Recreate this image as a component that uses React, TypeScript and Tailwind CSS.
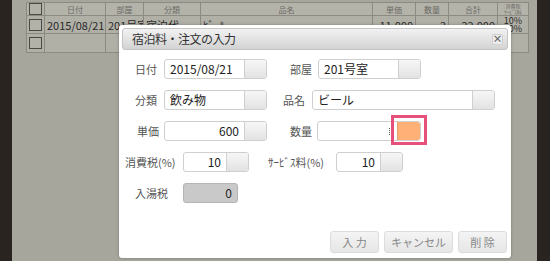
import React from 'react';

const font = "font-['Noto_Sans_CJK_JP',sans-serif]";

function Check() {
  return <div className="w-[13px] h-[12px] border border-[#4a4a45] bg-[#b3b2a9]" />;
}

function Field({ w, value, right, btn = true, disabled }: { w: number; value?: string; right?: boolean; btn?: boolean; disabled?: boolean }) {
  return (
    <div
      className={`flex h-[20px] rounded-[3px] border ${disabled ? 'border-[#b5b5b5] bg-[#c9c9c9]' : 'border-[#cfcfcf] bg-white'} overflow-hidden`}
      style={{ width: w }}
    >
      <div className={`flex-1 flex items-center px-[5px] text-[12px] text-[#222] ${right ? 'justify-end' : ''}`}>{value}</div>
      {btn && <div className="w-[22px] border-l border-[#d0d0d0] bg-gradient-to-b from-[#f6f6f6] via-[#ededed] to-[#e2e2e2]" />}
    </div>
  );
}

function Label({ children, className = '' }: { children: React.ReactNode; className?: string }) {
  return <div className={`text-[11px] text-[#555] whitespace-nowrap ${className}`}>{children}</div>;
}

export default function App() {
  const cols = [18, 61, 38, 57, 172, 43, 33, 49, 31];
  const heads = ['', '日付', '部屋', '分類', '品名', '単価', '数量', '合計', ''];
  const row1 = ['', '2015/08/21', '201号室', '宿泊代', 'ﾋﾞｰﾙ', '11,000', '2', '22,000', ''];
  return (
    <div className={`relative w-[550px] h-[261px] overflow-hidden flex bg-[#a7a69c] ${font}`}>
      <div className="w-[12px] h-full bg-[#2a2420]" />
      <div className="flex-1 pl-[14px] pt-[2px]">
        <table className="table-fixed w-[502px] border-collapse border border-[#8c8b83] text-[#2a2a2a]">
          <colgroup>
            {cols.map((c, i) => <col key={i} style={{ width: c }} />)}
          </colgroup>
          <tbody>
            <tr className="h-[13px] bg-[#b4b3aa]">
              {heads.map((h, i) => (
                <td key={i} className="border border-[#8c8b83] p-0 text-center text-[8px] leading-[11px] text-[#6a6a66] overflow-hidden whitespace-nowrap">
                  {i === 0 ? <div className="flex justify-center"><Check /></div> : i === 8 ? (
                    <div className="text-[5px] leading-[6px]">消費税<br />ｻｰﾋﾞｽ料</div>
                  ) : h}
                </td>
              ))}
            </tr>
            <tr className="h-[18px] bg-[#b1b0a7]">
              {row1.map((v, i) => (
                <td key={i} className={`border border-[#8c8b83] p-0 pl-[2px] pr-[2px] text-[11px] leading-[14px] overflow-hidden whitespace-nowrap ${i >= 5 ? 'text-right' : 'text-left'}`}>
                  {i === 0 ? <div className="flex justify-center"><Check /></div> : i === 8 ? (
                    <div className="text-[9px] leading-[8px] text-center">10%<br />10%</div>
                  ) : v}
                </td>
              ))}
            </tr>
            <tr className="h-[19px] bg-[#b1b0a7]">
              {row1.map((_, i) => (
                <td key={i} className="border border-[#8c8b83] p-0">
                  {i === 0 && <div className="flex justify-center"><Check /></div>}
                </td>
              ))}
            </tr>
          </tbody>
        </table>
      </div>
      <div className="w-[13px] h-full bg-[#2a2420]" />

      {/* dialog */}
      <div className="absolute left-[119px] top-[25px] w-[392px] h-[233px] bg-white rounded-[3px] shadow-[0_0_3px_rgba(0,0,0,0.3)] p-[3px] flex flex-col">
        <div className="h-[22px] rounded-[3px] border border-[#c4c4c4] bg-gradient-to-b from-[#f2f2f2] to-[#d3d3d3] flex items-center justify-between pl-[9px] pr-[4px]">
          <span className="text-[12px] text-[#333] tracking-[-0.5px]">宿泊料・注文の入力</span>
          <div className="w-[11px] h-[11px] rounded-[2px] border border-[#d0d0d0] bg-[#ededed] flex items-center justify-center text-[10px] leading-none font-bold text-[#666]">×</div>
        </div>
        <div className="flex flex-col gap-[11px] pt-[9px]">
          <div className="flex items-center">
            <Label className="w-[42px] pl-[13px]">日付</Label>
            <Field w={103} value="2015/08/21" />
            <Label className="w-[28px] ml-[23px]">部屋</Label>
            <Field w={103} value="201号室" />
          </div>
          <div className="flex items-center">
            <Label className="w-[42px] pl-[13px]">分類</Label>
            <Field w={103} value="飲み物" />
            <Label className="w-[29px] ml-[16px]">品名</Label>
            <Field w={183} value="ビール" />
          </div>
          <div className="flex items-center">
            <Label className="w-[42px] pl-[15px]">単価</Label>
            <Field w={103} value="600" right />
            <Label className="w-[27px] ml-[23px]">数量</Label>
            <div className="relative flex h-[20px] w-[104px] rounded-[3px] border border-[#cfcfcf] bg-white">
              <div className="flex-1 flex items-center justify-end pr-[7px]">
                <div className="w-[1px] h-[7px] border-l border-dotted border-[#555]" />
              </div>
              <div className="w-[23px] bg-[#ffb077] border-l border-[#e0a070] rounded-r-[3px]" />
              <div className="absolute left-[73px] top-[-7px] w-[36px] h-[30px] border-[3px] border-[#e8507c]" />
            </div>
          </div>
          <div className="flex items-center">
            <Label className="w-[61px] pl-[3px]">消費税(%)</Label>
            <Field w={66} value="10" right />
            <Label className="w-[68px] ml-[19px] text-[10px]">ｻｰﾋﾞｽ料(%)</Label>
            <Field w={67} value="10" right />
          </div>
          <div className="flex items-center">
            <Label className="w-[61px] pl-[13px]">入湯税</Label>
            <Field w={55} value="0" right btn={false} disabled />
          </div>
        </div>
        <div className="flex justify-end gap-[5px] mt-auto mb-[2px] pr-[1px]">
          {['入 力', 'キャンセル', '削 除'].map((b, i) => (
            <div key={b} className="h-[22px] rounded-[3px] border border-[#dcdcdc] bg-gradient-to-b from-[#f4f4f4] to-[#e6e6e6] flex items-center justify-center text-[11px] text-[#888]" style={{ width: i === 1 ? 69 : 49 }}>
              {b}
            </div>
          ))}
        </div>
      </div>
    </div>
  );
}
